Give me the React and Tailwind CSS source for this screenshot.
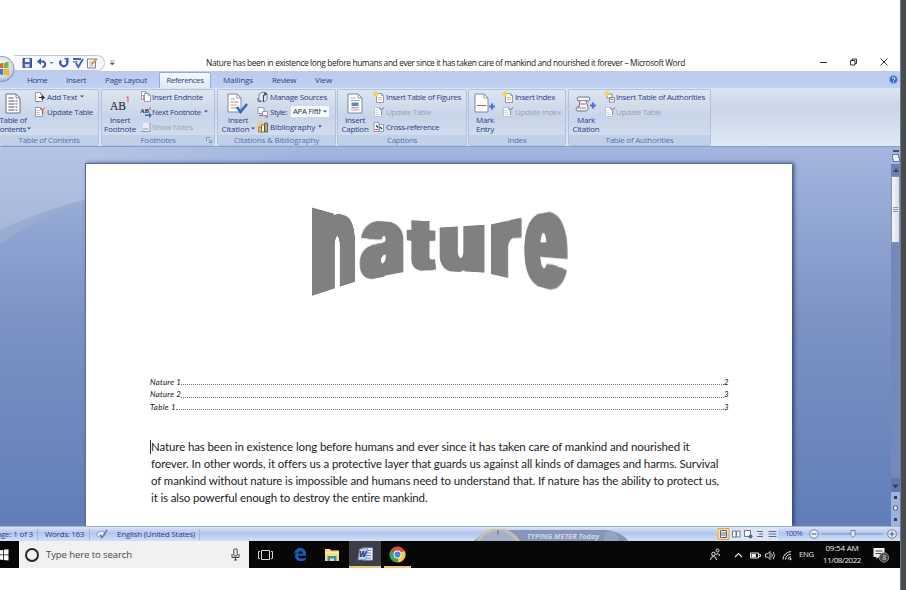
import React from "react";

const UI = '"Open Sans", "Noto Sans", sans-serif';
const DOC = 'Lato, "Open Sans", sans-serif';

const ctx = document.createElement("canvas").getContext("2d");

// Text tracked so that it fills a given width.
function T({ w, size = 8, font = UI, weight = 400, italic = false, className = "", children }) {
  ctx.font = `${italic ? "italic " : ""}${weight} ${size}px ${font}`;
  const natural = ctx.measureText(children).width;
  const spacing = w ? (w - natural) / children.length : 0;
  return (
    <span
      className={`block shrink-0 whitespace-pre leading-none ${className}`}
      style={{
        fontFamily: font,
        fontSize: size,
        fontWeight: weight,
        fontStyle: italic ? "italic" : "normal",
        letterSpacing: spacing,
        width: w,
      }}
    >
      {children}
    </span>
  );
}

// Projective transform taking the rectangle (0,0,w,h) to a quad with vertical sides.
function project(w, h, [x0, x1, tl, tr, br, bl]) {
  const hl = bl - tl;
  const hr = br - tr;
  const g = (hl / hr - 1) / w;
  const k = 1 + g * w;
  const a = (x1 * k - x0) / w;
  const b = (tr * k - tl) / w;
  const d = hl / h;
  return `matrix3d(${a},${b},0,${g},0,${d},0,0,0,0,1,0,${x0},${tl},0,1)`;
}

const WORD_ART = [
  ["n", [21.3, 65, 16.5, 29, 91.8, 106]],
  ["a", [69.3, 113.5, 29.5, 33, 83, 91.5]],
  ["t", [116, 146.7, 30, 31.5, 80.2, 81]],
  ["u", [149, 194.5, 37.6, 34.8, 83.5, 80.6]],
  ["r", [200.7, 231.7, 34.5, 27.5, 91, 84]],
  ["e", [234.3, 277.7, 26.5, 18.5, 104.5, 92.5]],
];

// Widens the stems sideways only, so the thin horizontal gaps stay open.
const GROW = 4;
const STEMS = [-4, -3, -2, -1, 1, 2, 3, 4].map((x) => `${x}px 0 0 #808080`).join(",");

function WordArt() {
  ctx.font = "900 100px Inter, sans-serif";
  return (
    <div className="relative h-[120px] w-[300px]">
      {WORD_ART.map(([ch, quad], i) => {
        const m = ctx.measureText(ch);
        const w = m.actualBoundingBoxLeft + m.actualBoundingBoxRight + GROW * 2;
        const h = m.actualBoundingBoxAscent + m.actualBoundingBoxDescent;
        const half = (m.fontBoundingBoxAscent + m.fontBoundingBoxDescent) / 2;
        const baseline = 50 + m.fontBoundingBoxAscent - half;
        return (
          <div
            key={i}
            className="absolute left-0 top-0 origin-top-left"
            style={{ width: w, height: h, transform: project(w, h, quad) }}
          >
            <span
              className="absolute font-['Inter'] text-[100px] font-black leading-none text-[#808080]"
              style={{
                left: m.actualBoundingBoxLeft + GROW,
                top: m.actualBoundingBoxAscent - baseline,
                textShadow: STEMS,
              }}
            >
              {ch}
            </span>
          </div>
        );
      })}
    </div>
  );
}

function Arrow({ className = "" }) {
  return (
    <svg width="4" height="3" viewBox="0 0 4 3" className={`shrink-0 ${className}`}>
      <path d="M0 .4h4L2 2.6z" fill="#3d4f8c" />
    </svg>
  );
}

/* Ribbon icons */

function Icon({ w = 12, h = 12, children, className = "" }) {
  return (
    <svg width={w} height={h} viewBox={`0 0 ${w} ${h}`} className={`shrink-0 ${className}`} fill="none">
      {children}
    </svg>
  );
}

const Page = ({ x = 0, y = 0, w = 8, h = 10, s = "#7c86a0" }) => (
  <>
    <path d={`M${x + 0.5} ${y + 0.5}h${w - 3}l2 2v${h - 3}h${-(w - 1)}z`} fill="#fff" stroke={s} strokeWidth=".8" />
    <path d={`M${x + w - 2.5} ${y + 0.5}v2h2`} stroke={s} strokeWidth=".7" />
  </>
);
const Star = ({ x = 0, y = 0 }) => (
  <path d={`M${x + 3} ${y}l1 2 2 1-2 1-1 2-1-2-2-1 2-1z`} fill="#f8d948" stroke="#e8c23a" strokeWidth=".5" />
);

const icons = {
  toc: (
    <Icon w={16} h={21}>
      <path d="M1 1h10l4 4v15H1z" fill="#fff" stroke="#68708a" />
      <path d="M11 1v4h4" stroke="#68708a" strokeWidth=".8" />
      <path d="M3.500 5h5M3.500 8h9M3.500 11h9M3.500 14h9M3.500 17h9" stroke="#4e566e" strokeWidth="1.100" strokeDasharray="6 1" />
    </Icon>
  ),
  addText: (
    <Icon>
      <Page x={1} y={1} />
      <path d="M5 6.500h5M8 4.500l2.500 2L8 8.500z" stroke="#27304f" fill="#27304f" />
      <path d="M2 10.500h3" stroke="#c55" />
    </Icon>
  ),
  update: (
    <Icon>
      <Page x={1} y={1} w={8} h={10} />
      <path d="M2.500 4.500h3M2.500 6.500h3M2.500 8.500h4" stroke="#9aa2b8" strokeWidth=".7" />
      <path d="M8.500 8V3" stroke="#d8503e" strokeWidth="1.500" />
      <path d="M6 2l2.500 2L11 1.500" stroke="#d8503e" />
    </Icon>
  ),
  updateOff: (
    <Icon>
      <Page x={1} y={1} s="#b2bac9" />
      <path d="M2.500 4.500h3M2.500 6.500h3M2.500 8.500h4" stroke="#b4bccb" strokeWidth=".7" />
      <path d="M8.500 9V3M6 2l2.500 2L11 1.500" stroke="#8f99af" strokeWidth="1.200" />
    </Icon>
  ),
  endnote: (
    <Icon>
      <Page x={1} y={0} w={7} h={9} />
      <Page x={4} y={2} w={7} h={9} />
      <path d="M2 4.500h1.500V8" stroke="#c66" strokeWidth=".8" />
    </Icon>
  ),
  nextNote: (
    <svg width="12" height="12" viewBox="0 0 12 12" className="shrink-0">
      <text x="0" y="7" fontSize="6.500" fontWeight="700" fontFamily="Liberation Serif, serif" fill="#222d4c">AB</text>
      <path d="M10 1v3" stroke="#c44" />
      <path d="M5 8.500h4v-2l3 2.800-3 2.700v-2H5z" fill="#3866cc" />
    </svg>
  ),
  showNotes: (
    <Icon>
      <path d="M3 2h7v8H3z" fill="#e9edf4" />
      <path d="M1 10.500h9V2M3 8h5" stroke="#8f99af" />
    </Icon>
  ),
  insertCitation: (
    <Icon w={22} h={21}>
      <path d="M1 1h9l4 4v14H1z" fill="#fff" stroke="#8089a3" />
      <path d="M10 1v4h4" stroke="#8089a3" strokeWidth=".8" />
      <path d="M3.500 6h4M3.500 9h8M3.500 15h8" stroke="#939bb0" />
      <path d="M3.500 12h7" stroke="#e9a04d" strokeWidth="1.200" />
      <path d="M10 14l3.500 5L20 11" stroke="#3868b8" strokeWidth="2.600" />
    </Icon>
  ),
  manage: (
    <Icon>
      <path d="M2 3l4-2 4 1.500v6.500L7 11 2 9z" fill="#e9edf5" stroke="#6b748e" strokeWidth=".8" />
      <path d="M6.500 4v6.500M10 3l-3.500 1.500" stroke="#39425c" strokeWidth="1.200" />
      <path d="M1 7v3.500h3" stroke="#5b6681" />
      <circle cx="8" cy="2.500" r="1.200" fill="#4b5570" />
    </Icon>
  ),
  style: (
    <Icon>
      <path d="M1 1.500h6v6H1z" fill="#fff" stroke="#7a86a6" strokeWidth=".8" />
      <path d="M5.500 5.500h5v4h-5z" fill="#fff" stroke="#7a86a6" strokeWidth=".8" />
      <path d="M2 9.500h4M8 11h3" stroke="#c65a5a" />
    </Icon>
  ),
  biblio: (
    <Icon>
      <Star x={0} y={0} />
      <path d="M1.500 6h3v5h-3z" fill="#f0c24b" stroke="#8d6b22" strokeWidth=".7" />
      <path d="M4.500 4h3v7h-3z" fill="#fff" stroke="#303a5c" strokeWidth=".7" />
      <path d="M7.500 2h3v9h-3z" fill="#caa53f" stroke="#303a5c" strokeWidth=".7" />
    </Icon>
  ),
  caption: (
    <Icon w={16} h={21}>
      <path d="M1 1h10l4 4v15H1z" fill="#fff" stroke="#7c86a0" />
      <path d="M11 1v4h4" stroke="#7c86a0" strokeWidth=".8" />
      <path d="M3.500 5h5M3.500 7.500h9M3.500 17h9" stroke="#98a0b5" strokeWidth=".9" />
      <rect x="4.500" y="9.500" width="7" height="3.500" fill="#5d83cf" />
      <path d="M4.500 14.800h7" stroke="#d85a5a" />
    </Icon>
  ),
  starPage: (
    <Icon>
      <Page x={3} y={2} w={8} h={10} />
      <path d="M5 6.500h4M5 8.500h4" stroke="#c9a36b" strokeWidth=".8" />
      <Star x={0} y={0} />
    </Icon>
  ),
  cross: (
    <Icon>
      <path d="M1 1.500h5v9H1z" fill="#fff" stroke="#7a86a6" strokeWidth=".8" />
      <path d="M6.500 3.500h4v7h-4z" fill="#fff" stroke="#7a86a6" strokeWidth=".8" />
      <path d="M3 4.500l2 2M7 6l2 2" stroke="#28304c" strokeWidth="1.300" />
      <path d="M2 8.500h3" stroke="#c44" />
    </Icon>
  ),
  markEntry: (
    <Icon w={22} h={21}>
      <path d="M1 1h9l4 4v14H1z" fill="#fff" stroke="#8089a3" />
      <path d="M10 1v4h4" stroke="#8089a3" strokeWidth=".8" />
      <path d="M3 12.500h9.500" stroke="#d0563c" strokeWidth="1.200" />
      <path d="M18 10.500v6M15 13.500h6" stroke="#4a73d4" strokeWidth="2.200" />
    </Icon>
  ),
  markCitation: (
    <Icon w={22} h={21}>
      <path d="M3 4h11q2 2 0 4h-3l2 6q1 3-2 4H2q-2-2 0-4h2L5 8H3q-2-2 0-4z" fill="#f4f4f4" stroke="#6f7688" />
      <path d="M4 7.500h8M3 15h8" stroke="#7f8798" strokeWidth=".9" />
      <path d="M5.500 11h5" stroke="#d0563c" strokeWidth="1.200" />
      <path d="M18 9.500v6M15 12.500h6" stroke="#4a73d4" strokeWidth="2.200" />
    </Icon>
  ),
  starAuth: (
    <Icon>
      <path d="M3 3h5v4H3zM5.500 6.500h5v4.500h-5z" fill="#fff" stroke="#6f7688" strokeWidth=".8" />
      <path d="M6.500 8.500h3" stroke="#c55" strokeWidth=".9" />
      <Star x={0} y={0} />
    </Icon>
  ),
};

function Row({ icon, label, w, off, arrow, gap = "w-[12px]" }) {
  return (
    <div className="flex h-[15px] items-center">
      <div className={`${gap} flex shrink-0`}>{icon}</div>
      <T w={w} size={8} className={off ? "text-[#9aa3b5]" : "text-[#2c3f88]"}>{label}</T>
      {arrow && <Arrow className="ml-[3px]" />}
    </div>
  );
}

function Big({ icon, l1, w1, l2, w2, arrow, className = "" }) {
  return (
    <div className={`flex shrink-0 flex-col items-center pt-[2px] ${className}`}>
      <div className="flex h-[23px] items-center">{icon}</div>
      <div className="flex h-[9px] items-center"><T w={w1} className="text-[#2c3f88]">{l1}</T></div>
      <div className="flex h-[9px] items-center">
        <T w={w2} className="text-[#2c3f88]">{l2}</T>
        {arrow && <Arrow className="ml-px" />}
      </div>
    </div>
  );
}

function Group({ className, title, tw, launcher, children }) {
  return (
    <section className={`flex h-[57px] shrink-0 flex-col overflow-hidden rounded-[2px] border border-[#b3c2dc] bg-linear-to-b from-[#dde5f0] via-[#c8d4e8] to-[#d6e2f0] ${className}`}>
      <div className="flex h-[45px] shrink-0">{children}</div>
      <div className="relative flex h-[10px] items-center justify-center bg-[#bfd0e8]">
        <T w={tw} className="text-[#5a74ab]">{title}</T>
        {launcher && (
          <svg width="6" height="6" viewBox="0 0 6 6" className="absolute right-[2px] top-[2px]">
            <path d="M.5 4V.5H4M2.500 2.500l3 3M5.500 3v2.500H3" fill="none" stroke="#7186b5" strokeWidth=".8" />
          </svg>
        )}
      </div>
    </section>
  );
}

function TitleBar() {
  return (
    <header className="flex h-[21px] items-center">
      <div className="ml-[14px] flex h-[16px] w-[91px] items-center rounded-r-full border border-l-0 border-[#c3c9d6] bg-[#f7f8fb]">
        <svg width="90" height="14" viewBox="0 0 90 14" fill="none">
          <path d="M9 2.500h8.500v9H9z" fill="#4b60b8" stroke="#34469a" />
          <path d="M11 2.500h4.500v3.500H11z" fill="#fff" />
          <path d="M11 8h4.500v3.500H11z" fill="#cfd6f2" />
          <path d="M26 5.500h2.500a2.700 2.700 0 010 5.400" stroke="#3c57b4" strokeWidth="2" />
          <path d="M23 5.500l4-3.500v7z" fill="#3c57b4" />
          <path d="M35.500 6h4l-2 2z" fill="#5b6a9c" />
          <path d="M47 4.500a3.500 3.500 0 105.500 0" stroke="#3c57b4" strokeWidth="2.100" />
          <path d="M50 2h4.500v4.500z" fill="#3c57b4" />
          <path d="M59 3h8M62 7l2.300 4 4.700-8" stroke="#4661bb" strokeWidth="1.900" />
          <path d="M59 5.800h4.500" stroke="#4661bb" strokeWidth="1.200" />
          <path d="M73.500 3h8v9h-8z" fill="#fbfbf6" stroke="#777f98" />
          <path d="M75 6h4M75 8h3M75 10h5" stroke="#9aa1b5" strokeWidth=".7" />
          <path d="M77.500 8.500l5.500-6" stroke="#e39a3d" strokeWidth="2" />
        </svg>
      </div>
      <svg width="5" height="6" viewBox="0 0 5 6" className="ml-[5px]"><path d="M0 1h4.500M.3 3h4L2.300 5z" stroke="#555" fill="#555" strokeWidth=".6" /></svg>
      <T w={479} size={8.4} className="ml-[91px] mt-[2px] text-[#222]">
        Nature has been in existence long before humans and ever since it has taken care of mankind and nourished it forever – Microsoft Word
      </T>
      <svg width="70" height="10" viewBox="0 0 70 10" className="ml-auto mr-[11px] -mt-px" fill="none" stroke="#333">
        <path d="M1 5.500h7" />
        <path d="M31.500 3.500h4.500v4.500h-4.500zM33 3.500V2h4.500v4.500H36" />
        <path d="M61.500 1.500l7 7M68.500 1.500l-7 7" />
      </svg>
    </header>
  );
}

function Orb() {
  return (
    <svg width="16" height="28" viewBox="0 0 16 28" className="absolute left-0 top-[55px]">
      <defs>
        <radialGradient id="orb" cx=".5" cy=".35" r=".7">
          <stop offset="0" stopColor="#fff" />
          <stop offset=".7" stopColor="#ccd5e4" />
          <stop offset="1" stopColor="#8b9ab8" />
        </radialGradient>
      </defs>
      <circle cx="1.500" cy="14" r="12.600" fill="url(#orb)" stroke="#8996b2" />
      <path d="M-1 9l4-1.500V13h-4z" fill="#e2653a" />
      <path d="M3.500 8l5-1.500V13h-5z" fill="#7fb341" />
      <path d="M-1 14h4v6l-4-1z" fill="#3f77c6" />
      <path d="M3.500 14h5.500v6.500l-5.500-1z" fill="#e9b53a" />
    </svg>
  );
}

const TABS = [
  ["Home", 20, "ml-[27px]"],
  ["Insert", 20, "ml-[19px]"],
  ["Page Layout", 42, "ml-[19px]"],
  ["References", 37, "ml-[12px]"],
  ["Mailings", 30, "ml-[12px]"],
  ["Review", 24, "ml-[19px]"],
  ["View", 17, "ml-[19px]"],
];

function Tabs() {
  return (
    <nav className="flex h-[17px] shrink-0 items-center bg-linear-to-b from-[#b9cbee] to-[#c0d1f3]">
      {TABS.map(([name, w, m]) =>
        name === "References" ? (
          <div key={name} className={`${m} flex h-[16px] w-[52px] shrink-0 items-center justify-center self-end rounded-t-[2px] border border-b-0 border-[#93acdb] bg-linear-to-b from-[#f6f9fe] to-[#dfe8f4] pb-px`}>
            <T w={w} className="text-[#2c3f88]">{name}</T>
          </div>
        ) : (
          <T key={name} w={w} className={`${m} text-[#2c3f88]`}>{name}</T>
        )
      )}
      <svg width="9" height="9" viewBox="0 0 9 9" className="ml-auto mr-[2px]">
        <circle cx="4.500" cy="4.500" r="4" fill="#3c66d0" stroke="#8ca6e0" />
        <path d="M3 3.500q1.500-2 3 0 0 1-1.500 1.800M4.500 6.300v1" fill="none" stroke="#fff" />
      </svg>
    </nav>
  );
}

function Ribbon() {
  return (
    <div className="flex h-[59px] shrink-0 items-start border-b border-[#8aa0c8] bg-linear-to-b from-[#dbe4f0] via-[#c9d5e9] via-35% to-[#deeaf4] pt-px">
      <Group className="w-[99px] border-l-0" title="Table of Contents" tw={61}>
        <Big className="-ml-[8px] w-[41px] pl-[1px]" icon={icons.toc} l1="Table of" w1={27} l2="Contents" w2={31} arrow />
        <div className="ml-px -mt-px">
          <Row icon={icons.addText} label="Add Text" w={30} arrow gap="w-[13px]" />
          <Row icon={icons.update} label="Update Table" w={46} gap="w-[13px]" />
        </div>
      </Group>
      <Group className="ml-[2px] w-[114px]" title="Footnotes" tw={35} launcher>
        <Big
          className="ml-[2px] w-[32px]"
          icon={
            <svg width="22" height="20" viewBox="0 0 22 20">
              <text x="1" y="15.500" fontSize="13" fontFamily="Liberation Serif, serif" fill="#2b3142" stroke="#2b3142" strokeWidth=".2" textLength="16" lengthAdjust="spacingAndGlyphs">AB</text>
              <path d="M17.500 3.500l1.500-1v6" fill="none" stroke="#d0564c" strokeWidth=".9" />
            </svg>
          }
          l1="Insert" w1={20} l2="Footnote" w2={32}
        />
        <div className="ml-[4px] -mt-px">
          <Row icon={icons.endnote} label="Insert Endnote" w={51} />
          <Row icon={icons.nextNote} label="Next Footnote" w={49} arrow />
          <Row icon={icons.showNotes} label="Show Notes" w={41} off />
        </div>
      </Group>
      <Group className="ml-[2px] w-[119px]" title="Citations & Bibliography" tw={85}>
        <Big className="ml-[2px] w-[36px]" icon={icons.insertCitation} l1="Insert" w1={20} l2="Citation" w2={28} arrow />
        <div className="ml-[1px] -mt-px">
          <Row icon={icons.manage} label="Manage Sources" w={57} gap="w-[13px]" />
          <div className="flex h-[15px] items-center">
            <div className="flex w-[13px]">{icons.style}</div>
            <T w={17} className="text-[#2c3f88]">Style:</T>
            <div className="ml-[3px] flex h-[13px] w-[40px] items-center justify-between border border-[#cdd8ea] bg-[#f5f8fc] px-[2px]">
              <div className="w-[28px] overflow-hidden"><T w={30} size={7.8} className="text-[#333]">APA Fifth</T></div>
              <Arrow />
            </div>
          </div>
          <Row icon={icons.biblio} label="Bibliography" w={45} arrow gap="w-[13px]" />
        </div>
      </Group>
      <Group className="ml-[1px] w-[130px]" title="Captions" tw={30}>
        <Big className="ml-[3px] w-[28px]" icon={icons.caption} l1="Insert" w1={20} l2="Caption" w2={27} />
        <div className="ml-[4px] -mt-px">
          <Row icon={icons.starPage} label="Insert Table of Figures" w={75} gap="w-[13px]" />
          <Row icon={icons.updateOff} label="Update Table" w={45} off gap="w-[13px]" />
          <Row icon={icons.cross} label="Cross-reference" w={53} gap="w-[13px]" />
        </div>
      </Group>
      <Group className="ml-[1px] w-[98px]" title="Index" tw={19}>
        <Big className="ml-[5px] w-[22px]" icon={icons.markEntry} l1="Mark" w1={18} l2="Entry" w2={18} />
        <div className="ml-[6px] -mt-px">
          <Row icon={icons.starPage} label="Insert Index" w={40} gap="w-[13px]" />
          <Row icon={icons.updateOff} label="Update Index" w={46} off gap="w-[13px]" />
        </div>
      </Group>
      <Group className="ml-[2px] w-[143px]" title="Table of Authorities" tw={68}>
        <Big className="ml-[3px] w-[28px]" icon={icons.markCitation} l1="Mark" w1={18} l2="Citation" w2={27} />
        <div className="ml-[4px] -mt-px">
          <Row icon={icons.starAuth} label="Insert Table of Authorities" w={89} />
          <Row icon={icons.updateOff} label="Update Table" w={45} off />
        </div>
      </Group>
    </div>
  );
}

const CONTENTS = [["Nature 1", 31, "2"], ["Nature 2", 31, "3"], ["Table 1", 26, "3"]];
const BODY = [
  ["Nature has been in existence long before humans and ever since it has taken care of mankind and nourished it", 539],
  ["forever. In other words, it offers us a protective layer that guards us against all kinds of damages and harms. Survival", 568],
  ["of mankind without nature is impossible and humans need to understand that. If nature has the ability to protect us,", 569],
  ["it is also powerful enough to destroy the entire mankind.", 277],
];

function ScrollBar() {
  return (
    <div className="flex w-[9px] shrink-0 flex-col items-center bg-[#7389bb]">
      <div className="flex h-[17px] w-full flex-col items-center bg-[#a3b5dc]">
        <div className="mt-[3px] h-[2px] w-[6px] bg-[#41507c]" />
        <svg width="8" height="8" viewBox="0 0 8 8" className="mt-[2px]"><path d="M.5.500h6v3h1v4h-6v-2h-1z" fill="#eef1f8" stroke="#69769b" /></svg>
      </div>
      <div className="flex h-[12px] w-full items-center justify-center bg-[#6d82b3]">
        <svg width="6" height="4"><path d="M0 4h6L3 0z" fill="#34466f" /></svg>
      </div>
      <div className="flex h-[67px] w-full flex-col items-center justify-center gap-px border border-[#8190b3] bg-linear-to-r from-[#f5f7fb] to-[#d5ddeb]">
        <i className="h-px w-[5px] bg-[#8b96b0]" /><i className="h-px w-[5px] bg-[#8b96b0]" /><i className="h-px w-[5px] bg-[#8b96b0]" />
      </div>
      <div className="flex-1" />
      <svg width="9" height="48" viewBox="0 0 9 48">
        <path d="M0 0h9v14H0z" fill="#5f77ad" /><path d="M1.500 6.500h6l-3 4z" fill="#2e4170" />
        <path d="M0 14h9v34H0z" fill="#9fb2de" />
        <path d="M3 18h3v3H3zM3 40h3v3H3z" fill="#2b3c6b" />
        <circle cx="4.500" cy="30" r="2.300" fill="#d9e0ee" stroke="#485a89" />
      </svg>
    </div>
  );
}

function Workspace() {
  return (
    <main className="relative flex h-[379px] shrink-0 overflow-hidden bg-linear-to-b from-[#a4b6df] via-[#7c93c4] via-45% to-[#617eb8]">
      <svg width="300" height="110" viewBox="0 0 300 110" className="absolute left-0 top-0">
        <defs>
          <linearGradient id="glow" x1="0" y1="0" x2="0" y2="1">
            <stop offset="0" stopColor="#b5c4e6" />
            <stop offset="1" stopColor="#a8b8da" />
          </linearGradient>
          <linearGradient id="fade" x1="0" y1="0" x2="1" y2="0">
            <stop offset="0" stopColor="#b5c4e6" />
            <stop offset="1" stopColor="#b5c4e6" stopOpacity="0" />
          </linearGradient>
        </defs>
        <path d="M0 0h86v55Q40 69 0 97z" fill="#9bacd1" />
        <path d="M0 0h86v52Q40 64 0 83z" fill="url(#glow)" />
        <path d="M86 0h214v16H86z" fill="url(#fade)" />
      </svg>
      <article className="relative ml-[85px] mt-[16px] flex w-[707px] shrink-0 flex-col border-l border-t border-[#5f6d92] bg-white shadow-[2px_0_4px_rgba(30,45,85,0.75)]">
        <div className="ml-[204px] mt-[26px] h-[120px]"><WordArt /></div>
        <div className="ml-[64px] mt-[66.5px] w-[579px]">
          {CONTENTS.map(([name, w, n]) => (
            <div key={name} className="flex h-[12.500px] items-center">
              <T w={w} size={7.8} font={DOC} italic className="text-[#111]">{name}</T>
              <span className="mt-[4px] h-px flex-1 border-b border-dotted border-[#777]" />
              <T w={5} size={7.800} font={DOC} italic className="text-[#111]">{n}</T>
            </div>
          ))}
        </div>
        <div className="ml-[65px] mt-[24px] flex flex-col">
          {BODY.map(([line, w], i) => (
            <div key={i} className="flex h-[17px] items-center">
              {i === 0 && <i className="-ml-px h-[14px] w-px bg-[#1d2f5d]" />}
              <T w={w} size={11.5} font={DOC} className="text-[#222]">{line}</T>
            </div>
          ))}
        </div>
      </article>
      <div className="flex-1" />
      <ScrollBar />
    </main>
  );
}

function StatusBar() {
  return (
    <footer className="relative flex h-[15px] shrink-0 items-center overflow-hidden border-t border-[#9fb1d8] bg-linear-to-b from-[#d9e4f8] via-[#b2c5ed] via-45% to-[#d3e0f6]">
      <T w={41} className="-ml-[8px] text-[#2c3f88]">Page: 1 of 3</T>
      <i className="ml-[4px] h-[11px] w-px bg-[#a1b3d9]" />
      <T w={39} className="ml-[7px] text-[#2c3f88]">Words: 163</T>
      <i className="ml-[5px] h-[11px] w-px bg-[#a1b3d9]" />
      <svg width="12" height="11" viewBox="0 0 12 11" className="ml-[6px]">
        <path d="M1 4l5-2 4 3-4 4-5-2z" fill="#eef2fa" stroke="#7d8bb0" strokeWidth=".8" />
        <path d="M4 5.500l2 3L11 1" fill="none" stroke="#6279b8" strokeWidth="1.500" />
      </svg>
      <T w={78} className="ml-[9px] text-[#2c3f88]">English (United States)</T>
      <i className="ml-[4px] h-[11px] w-px bg-[#a1b3d9]" />
      <svg width="160" height="13" viewBox="0 0 160 13" className="absolute left-[471px] top-[2px]">
        <path d="M2 13Q12 1 30 1H135Q150 2 158 13z" fill="#8795ba" />
        <path d="M6 13A24 24 0 0148 13" fill="#a5afc8" stroke="#c3c1ae" strokeWidth="3" />
        <path d="M27 1v5" stroke="#69728c" />
        <circle cx="140" cy="9" r="7" fill="#96a3c3" />
        <text x="56" y="9.500" fontSize="7.500" fontStyle="italic" fontWeight="700" fontFamily="Open Sans, sans-serif" fill="#ccd5e9" textLength="72" lengthAdjust="spacingAndGlyphs">TYPING METER Today</text>
      </svg>
      <div className="ml-auto flex items-center">
        <svg width="61" height="13" viewBox="0 0 61 13" fill="none">
          <path d="M0 0h61v13H0z" fill="#dbe5f6" />
          <path d="M1 .500h11v11H1z" fill="#fbe0a0" stroke="#d9a441" />
          <path d="M3.500 2.500h6v7h-6z" fill="#fff" stroke="#5b6488" /><path d="M4 5h5M4 7h5" stroke="#5b6488" />
          <path d="M15.500 3h3.500v6h-3.500zM19.500 3H23v6h-3.500z" fill="#fff" stroke="#6b7598" />
          <path d="M27.500 2.500h6v6h-6z" fill="#fff" stroke="#6b7598" /><circle cx="33.500" cy="8.500" r="2" fill="#4b6c9b" />
          <path d="M40 3.500h6M42 6h4M40 8.500h6M51.500 3.500h8M51.500 6h8M51.500 8.500h8" stroke="#5f6a92" />
        </svg>
        <T w={17} size={7.8} className="ml-[7px] text-[#3c50a0]">100%</T>
        <svg width="93" height="12" viewBox="0 0 93 12" fill="none" className="ml-[3px] mr-[2px]">
          <path d="M16 6h62" stroke="#7d91bf" />
          <circle cx="9" cy="6" r="4.300" fill="#e6ecf7" stroke="#74829f" /><path d="M6.500 6h5" stroke="#42507c" />
          <path d="M46 2.500h4v5l-2 2-2-2z" fill="#e6ecf7" stroke="#6f7fa6" />
          <circle cx="87" cy="6" r="4.300" fill="#e6ecf7" stroke="#74829f" /><path d="M84.500 6h5M87 3.500v5" stroke="#42507c" />
        </svg>
      </div>
    </footer>
  );
}

function TaskBar() {
  return (
    <div className="flex h-[27px] shrink-0 items-center overflow-hidden bg-[#070707] text-white">
      <div className="flex h-full w-[19px] items-center">
        <svg width="10" height="12" viewBox="0 0 10 12" fill="#fff"><path d="M0 1.200L3 .9v4.600H0zM3.800.800L8.500.200v5.300H3.800zM0 6.300h3v4.600l-3-.3zM3.800 6.300h4.700v5.300l-4.700-.6z" /></svg>
      </div>
      <div className="flex h-full w-[230px] shrink-0 items-center bg-[#f1f1f1]">
        <i className="ml-[6px] size-[14px] shrink-0 rounded-full border-[2px] border-[#262626]" />
        <T w={86} size={9.600} className="ml-[7px] text-[#4a4a4a]">Type here to search</T>
        <svg width="9" height="13" viewBox="0 0 9 13" fill="none" stroke="#444" className="ml-auto mr-[9px]">
          <rect x="2.800" y="1" width="3.400" height="7" rx=".8" /><path d="M1 6v3.500h7V6M4.500 9.500V12M3 12h3" />
        </svg>
      </div>
      <svg width="15" height="12" viewBox="0 0 15 12" fill="none" stroke="#d6d6d6" className="ml-[9px] shrink-0">
        <path d="M3.500 1.500h8v9h-8zM2 2.500H.5v7H2M13 2.500h1.500v7H13" />
      </svg>
      <svg width="14" height="15" viewBox="0 0 14 15" className="ml-[20px] shrink-0">
        <path d="M1 7.500C1.500 2.500 4.500 1 7.300 1c3.500 0 5.700 2.500 5.700 6v1.700H5c.2 2 1.700 2.800 3.700 2.800 1.300 0 2.700-.4 3.800-1v2.600c-1.200.7-2.900 1-4.500 1-4 0-6-2.300-6-5 0-2 1-3.700 3-4.700C3 4.800 2 6 1 7.500zM5 6.700h4.800C9.800 5 9 4.200 7.500 4.200 6.200 4.200 5.200 5.200 5 6.700z" fill="#1260b8" fillRule="evenodd" />
      </svg>
      <svg width="16" height="14" viewBox="0 0 16 14" className="ml-[17px] shrink-0">
        <path d="M1 1h5l1 1.500h8V13H1z" fill="#f5dc85" /><path d="M1 4h14v1H1z" fill="#fff0b2" />
        <path d="M3.500 13V8h9v5h-2.500v-2.500H6V13z" fill="#3d8fb0" />
      </svg>
      <div className="ml-[9px] flex h-full w-[32px] shrink-0 flex-col items-center justify-end border-b-2 border-[#eec67a] bg-[#3c3e47] pb-[3px]">
        <svg width="17" height="17" viewBox="0 0 17 17">
          <path d="M5.500 2h10v12h-10z" fill="#f4f6fb" stroke="#9daace" /><path d="M9 4.500h5M9 7h5M9 9.500h5M9 12h5" stroke="#6279b0" />
          <path d="M2.500 3l8-1-1.500 11.500-8 .5z" fill="#c3cfee" stroke="#7387bd" strokeWidth=".6" />
          <text x="2" y="11" fontSize="8" fontStyle="italic" fontWeight="800" fontFamily="Open Sans, sans-serif" fill="#2d4587">W</text>
        </svg>
      </div>
      <div className="ml-[3px] flex h-full w-[27px] shrink-0 flex-col items-center justify-end border-b-2 border-[#eec67a] pb-[3px]">
        <svg width="17" height="17" viewBox="0 0 17 17">
          <path d="M8.500 8.500L1.570 4.500A8 8 0 0115.430 4.500z" fill="#df4b3b" />
          <path d="M8.500 8.500l6.930-4A8 8 0 018.500 16.500z" fill="#f7cc3e" />
          <path d="M8.500 8.500v8A8 8 0 011.570 4.500z" fill="#3aa657" />
          <circle cx="8.500" cy="8.500" r="4" fill="#fff" /><circle cx="8.500" cy="8.500" r="3.100" fill="#4484ec" />
        </svg>
      </div>
      <svg width="84" height="16" viewBox="0 0 84 16" fill="none" stroke="#e6e6e6" className="ml-auto shrink-0">
        <circle cx="4.500" cy="7" r="1.800" /><path d="M1.500 13q0-3.500 3-3.500t3 3.500" /><circle cx="8.500" cy="3.500" r="1.500" /><path d="M7 7.500q3.500-2 3.500 1.500" />
        <path d="M26 10l3.500-3.500L33 10" strokeWidth="1.200" />
        <path d="M41.500 6h8v5h-8zM50 7.500h1.500v2H50" /><path d="M43 7.500h3.500v2.500H43z" fill="#eee" />
        <path d="M56.500 7h2L61 4.500v8L58.500 10h-2zM62.500 6.500q1.500 2 0 4M64.300 5q2.500 3.500 0 7" strokeWidth=".9" />
        <path d="M74 12.500q.5-7 8-8M76.500 12.500q.3-4.500 5.500-5.500M79 12.500q0-2.500 3-3" strokeWidth="1" /><circle cx="81.500" cy="12" r=".7" fill="#eee" />
      </svg>
      <T w={15} size={7.800} className="ml-[6px] text-[#e4e4e4]">ENG</T>
      <div className="ml-[9px] flex w-[38px] shrink-0 flex-col items-center gap-[4px] pb-px">
        <T w={33} size={8} className="text-[#eee]">09:54 AM</T>
        <T w={38} size={8} className="text-[#eee]">11/08/2022</T>
      </div>
      <svg width="17" height="18" viewBox="0 0 17 18" className="ml-[12px] mr-[10px] shrink-0">
        <path d="M.5 2h11v9H6L3.500 13v-2h-3z" fill="#f3f3f3" /><path d="M2.500 5h7M2.500 7.500h7" stroke="#444" />
        <circle cx="11" cy="11.500" r="4.700" fill="#45484c" stroke="#999" strokeWidth=".8" />
        <text x="9.200" y="14.200" fontSize="7" fontFamily="Open Sans, sans-serif" fill="#ddd">8</text>
      </svg>
    </div>
  );
}

export default function App() {
  return (
    <div className="flex h-[590px] w-[906px] overflow-hidden bg-white">
      <div className="relative flex w-[900px] shrink-0 flex-col overflow-hidden pt-[52px]">
        <TitleBar />
        <div className="-mt-[2px] flex flex-col">
          <Tabs />
          <Ribbon />
          <Workspace />
          <StatusBar />
          <TaskBar />
        </div>
        <Orb />
      </div>
      <div className="flex-1 border-l border-[#777b80] bg-[#484c51]" />
    </div>
  );
}
